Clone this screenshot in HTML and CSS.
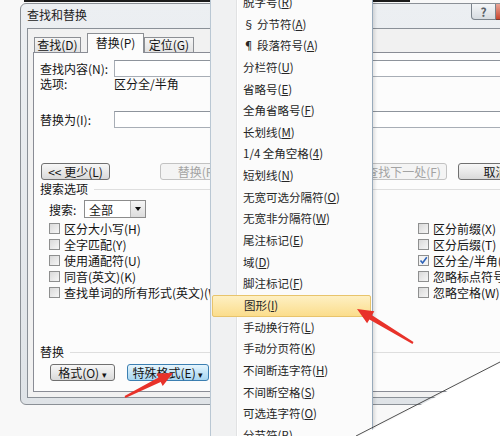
FILE: index.html
```html
<!DOCTYPE html>
<html lang="zh-CN">
<head>
    <meta charset="UTF-8">
    <title>查找和替换</title>
    <link rel="stylesheet" href="styles.css">
</head>
<body>
<div class="screen">
    <div class="top-strip"></div>

    <!-- Find and replace dialog -->
    <div class="dialog">
        <div class="titlebar">
            <span class="title">查找和替换</span>
            <div class="caption-btns">
                <span class="help-btn">?</span>
                <span class="close-btn"></span>
            </div>
        </div>

        <div class="client">
            <div class="tabs">
                <div class="tab tab-find">查找(D)</div>
                <div class="tab tab-replace active">替换(P)</div>
                <div class="tab tab-goto">定位(G)</div>
            </div>

            <div class="panel">
                <div class="field">
                    <span class="field-label">查找内容(N):</span>
                    <div class="text-input"></div>
                </div>
                <div class="field note">
                    <span class="field-label">选项:</span>
                    <span>区分全/半角</span>
                </div>
                <div class="field field-replace">
                    <span class="field-label">替换为(I):</span>
                    <div class="text-input"></div>
                </div>

                <div class="btn-row">
                    <div class="btn btn-less">&lt;&lt; 更少(L)</div>
                    <div class="btn btn-replace disabled">替换(R)</div>
                    <div class="btn btn-replace-all"></div>
                    <div class="btn btn-next disabled">查找下一处(F)</div>
                    <div class="btn btn-cancel">取消</div>
                </div>

                <div class="group-title">搜索选项</div>
                <div class="search-row">
                    <span class="search-label">搜索:</span>
                    <div class="select">
                        <span>全部</span>
                        <span class="select-arrow"></span>
                    </div>
                </div>

                <div class="options">
                    <div class="opt-col left">
                        <div class="opt"><span class="box"></span>区分大小写(H)</div>
                        <div class="opt"><span class="box"></span>全字匹配(Y)</div>
                        <div class="opt"><span class="box"></span>使用通配符(U)</div>
                        <div class="opt"><span class="box"></span>同音(英文)(K)</div>
                        <div class="opt"><span class="box"></span>查找单词的所有形式(英文)(W)</div>
                    </div>
                    <div class="opt-col">
                        <div class="opt"><span class="box"></span>区分前缀(X)</div>
                        <div class="opt"><span class="box"></span>区分后缀(T)</div>
                        <div class="opt">
                            <span class="box checked">
                                <svg width="9" height="9" viewBox="0 0 9 9"><path d="M1.5 4.5 L3.6 7 L7.8 1.2" fill="none" stroke="#2d62b8" stroke-width="1.6"/></svg>
                            </span>区分全/半角(M)
                        </div>
                        <div class="opt"><span class="box"></span>忽略标点符号(S)</div>
                        <div class="opt"><span class="box"></span>忽略空格(W)</div>
                    </div>
                </div>

                <div class="group-title group-replace">替换</div>
                <div class="btn-row bottom">
                    <div class="btn btn-format">格式(O) <span class="caret">▾</span></div>
                    <div class="btn btn-special pressed">特殊格式(E) <span class="caret">▾</span></div>
                </div>
            </div>
        </div>
    </div>

    <!-- Special format dropdown -->
    <div class="menu">
        <div class="menu-item">脱字号(<u>R</u>)</div>
        <div class="menu-item">§ 分节符(<u>A</u>)</div>
        <div class="menu-item">¶ 段落符号(<u>A</u>)</div>
        <div class="menu-item">分栏符(<u>U</u>)</div>
        <div class="menu-item">省略号(<u>E</u>)</div>
        <div class="menu-item">全角省略号(<u>F</u>)</div>
        <div class="menu-item">长划线(<u>M</u>)</div>
        <div class="menu-item">1/4 全角空格(<u>4</u>)</div>
        <div class="menu-item">短划线(<u>N</u>)</div>
        <div class="menu-item">无宽可选分隔符(<u>O</u>)</div>
        <div class="menu-item">无宽非分隔符(<u>W</u>)</div>
        <div class="menu-item">尾注标记(<u>E</u>)</div>
        <div class="menu-item">域(<u>D</u>)</div>
        <div class="menu-item">脚注标记(<u>F</u>)</div>
        <div class="menu-item hover">图形(<u>I</u>)</div>
        <div class="menu-item">手动换行符(<u>L</u>)</div>
        <div class="menu-item">手动分页符(<u>K</u>)</div>
        <div class="menu-item">不间断连字符(<u>H</u>)</div>
        <div class="menu-item">不间断空格(<u>S</u>)</div>
        <div class="menu-item">可选连字符(<u>O</u>)</div>
        <div class="menu-item">分节符(<u>B</u>)</div>
    </div>

    <!-- Red arrows and page curl drawn over the shot -->
    <svg class="marks" width="500" height="436" viewBox="0 0 500 436">
        <polygon points="360,436 500,364 500,436" fill="#ffffff"/>
        <line x1="356" y1="436" x2="500" y2="362" stroke="#3a3a3a" stroke-width="0.9"/>
        <polygon points="357,309 374.3,311.3 372,315.2 413.5,342.1 412.5,343.9 369.4,319.4 367.1,323.3" fill="#e8322a"/>
        <polygon points="173,373 156.5,373.4 158.5,377.5 124.6,396.1 125.4,397.9 160.7,381.9 162.7,386" fill="#e8322a"/>
    </svg>
</div>
</body>
</html>
```

FILE: styles.css
```css
/* Reset default styles */
* {
    margin: 0;
    padding: 0;
    box-sizing: border-box;
}

body {
    background: #f8f8f8;
}

.screen {
    position: relative;
    width: 500px;
    height: 436px;
    overflow: hidden;
    background: #f8f8f8;
    font-family: "Noto Sans CJK SC", "Liberation Sans", sans-serif;
    font-size: 12px;
    color: #141414;
}

.top-strip {
    margin-left: 24px;
    width: 386px;
    height: 2px;
    background: #1b1b1b;
}

/* Dialog window */
.dialog {
    margin: 1px 0 0 20px;
    width: 526px;
    height: 402px;
    border: 1px solid #8b9096;
    border-radius: 6px;
    background: linear-gradient(#eceff2, #dfe3e7);
    padding: 0 5px 6px 6px;
}

.titlebar {
    height: 24px;
    display: flex;
    justify-content: space-between;
    align-items: flex-start;
}

.title {
    padding: 3px 0 0 0;
    line-height: 16px;
    color: #222;
}

.caption-btns {
    display: flex;
    margin-right: 1px;
}

.help-btn {
    width: 25px;
    height: 16px;
    border: 1px solid #7b838b;
    border-top: none;
    border-radius: 0 0 0 4px;
    background: linear-gradient(#f4f6f8, #d6dbe0);
    color: #5a5f66;
    font-weight: bold;
    font-size: 12px;
    line-height: 15px;
    text-align: center;
}

.close-btn {
    width: 43px;
    height: 16px;
    border: 1px solid #7b3b32;
    border-top: none;
    border-left: none;
    border-radius: 0 0 4px 0;
    background: linear-gradient(#e9a597, #c9462f);
}

.client {
    height: 370px;
    border: 1px solid #8a9097;
    background: #f1f1f1;
    padding: 4px 0 5px 5px;
}

/* Tabs */
.tabs {
    height: 19px;
    display: flex;
    align-items: flex-end;
}

.tab {
    height: 15px;
    border: 1px solid #8c8f94;
    border-bottom: none;
    background: linear-gradient(#f6f6f6, #e2e2e2);
    line-height: 14px;
    text-align: center;
}

.tab-find {
    margin-left: 1px;
    width: 47px;
}

.tab-replace {
    margin-left: 6px;
    width: 57px;
}

.tab-goto {
    width: 50px;
}

.tab.active {
    height: 20px;
    margin-bottom: -1px;
    background: #fcfcfc;
    line-height: 17px;
    position: relative;
    z-index: 1;
}

.panel {
    height: 340px;
    border: 1px solid #898c95;
    background: #fcfcfc;
    padding: 7px 0 0 6px;
}

/* Text fields */
.field {
    display: flex;
    align-items: center;
    height: 17px;
    line-height: 14px;
}

.field.note {
    height: 14px;
}

.field-replace {
    margin-top: 20px;
}

.field-label {
    width: 74px;
    flex-shrink: 0;
}

.text-input {
    width: 420px;
    height: 17px;
    border: 1px solid #a8aeb6;
    border-top-color: #8e949c;
    background: #fff;
}

/* Buttons */
.btn-row {
    display: flex;
    margin: 35px 0 0 1px;
}

.btn {
    flex-shrink: 0;
    height: 17px;
    border: 1px solid #707070;
    border-radius: 3px;
    background: linear-gradient(#f7f7f7, #e9e9e9 50%, #d9d9d9);
    line-height: 15px;
    text-align: center;
    white-space: nowrap;
}

.btn.disabled {
    border-color: #c2c2c2;
    background: #f4f4f4;
    color: #a3a3a3;
}

.btn.pressed {
    border-color: #3c7fb1;
    background: linear-gradient(#e6f5fd, #c4e5f7 50%, #a8d6f1);
}

.btn-less { width: 69px; }
.btn-replace { width: 75px; margin-left: 50px; }
.btn-replace-all { width: 75px; margin-left: 10px; }
.btn-next { width: 87px; margin-left: 40px; }
.btn-cancel { width: 75px; margin-left: 11px; }

.btn-row.bottom {
    margin: 5px 0 0 10px;
}

.btn-format { width: 65px; }
.btn-special { width: 82px; margin-left: 12px; }

.caret {
    font-size: 9px;
}

/* Search options */
.group-title {
    margin-top: 2px;
    height: 14px;
    line-height: 14px;
    display: flex;
    align-items: center;
    gap: 6px;
}

.group-title::after {
    content: "";
    flex: 1;
    border-top: 1px solid #dedede;
}

.group-replace {
    margin-top: 45px;
}

.search-row {
    display: flex;
    align-items: center;
    margin: 4px 0 0 9px;
    height: 18px;
}

.search-label {
    width: 35px;
}

.select {
    width: 62px;
    height: 18px;
    border: 1px solid #8c8c8c;
    background: #fff;
    display: flex;
    align-items: center;
    justify-content: space-between;
    padding-left: 4px;
}

.select-arrow {
    width: 15px;
    height: 16px;
    border-left: 1px solid #b5b5b5;
    background: linear-gradient(#f6f6f6, #dcdcdc);
    position: relative;
}

.select-arrow::after {
    content: "";
    position: absolute;
    left: 4px;
    top: 6px;
    border-left: 3.5px solid transparent;
    border-right: 3.5px solid transparent;
    border-top: 4px solid #111;
}

.options {
    display: flex;
    margin: 2px 0 0 9px;
}

.opt-col.left {
    width: 369px;
    flex-shrink: 0;
}

.opt {
    display: flex;
    align-items: center;
    gap: 4px;
    height: 16px;
    white-space: nowrap;
}

.box {
    width: 11px;
    height: 11px;
    flex-shrink: 0;
    border: 1px solid #8e8f8f;
    background: linear-gradient(135deg, #d9d9d9, #f6f6f6);
    display: flex;
    align-items: center;
    justify-content: center;
}

.box.checked {
    background: #f3f3f3;
}

/* Dropdown menu */
.menu {
    position: absolute;
    left: 210px;
    top: -8px;
    width: 163px;
    height: 460px;
    border-left: 1px solid #b9c7d3;
    border-right: 1px solid #98aabb;
    background: linear-gradient(to right, #f0f1f2 0 25px, #e1e2e3 25px 26px, #ffffff 26px 27px, #fbfbfb 27px);
    box-shadow: 2px 2px 3px rgba(0, 0, 0, 0.12);
}

.menu-item {
    height: 21.65px;
    line-height: 21.65px;
    padding-left: 32px;
    font-size: 11.5px;
    color: #262626;
    white-space: nowrap;
}

.menu-item.hover {
    margin: 0 1px;
    padding-left: 31px;
    line-height: 19.65px;
    border: 1px solid #e8c46c;
    border-radius: 2px;
    background: linear-gradient(#fef0c3, #fbdd8c);
}

.marks {
    position: absolute;
    left: 0;
    top: 0;
    pointer-events: none;
}
```
